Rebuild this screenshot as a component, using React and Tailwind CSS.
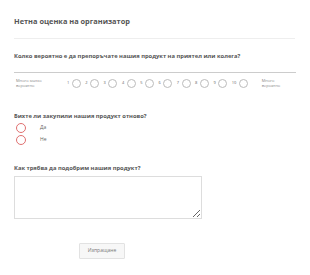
export default function App() {
  const nums = [1, 2, 3, 4, 5, 6, 7, 8, 9, 10]
  return (
    <div className="w-[310px] h-[275px] bg-white text-[#555] px-[14px] pt-[15px]" style={{ fontFamily: '"Open Sans", sans-serif' }}>
      <h1 className="text-[7.4px] font-bold leading-[12px] text-[#555]">Нетна оценка на организатор</h1>
      <div className="mt-[11px] border-t border-[#eee] mr-[1px]" />

      <p className="mt-[13px] text-[5.8px] font-bold leading-[8px] text-[#555]">
        Колко вероятно е да препоръчате нашия продукт на приятел или колега?
      </p>
      <div className="mt-[12px] border-t border-[#ccc]" />

      <div className="mt-[5px] flex items-center">
        <div className="w-[53px] pl-[2px]">
          <div className="w-[30px] text-[4px] leading-[5px] text-[#888]">Много малко вероятно</div>
        </div>
        <div className="flex items-center gap-[4.5px]">
          {nums.map(n => (
            <label key={n} className="flex items-center gap-[2.5px] text-[4px] text-[#666]">
              <span>{n}</span>
              <span className="w-[9px] h-[9px] rounded-full border border-[#bbb] bg-white" />
            </label>
          ))}
        </div>
        <div className="ml-[14px] text-[4px] leading-[5px] text-[#888]">Много<br />вероятно</div>
      </div>

      <p className="mt-[24px] text-[5.8px] font-bold leading-[8px] text-[#555]">
        Бихте ли закупили нашия продукт отново?
      </p>
      <div className="mt-[3px] flex flex-col gap-[2px] pl-[2px]">
        {['Да', 'Не'].map(t => (
          <label key={t} className="flex items-center h-[10px]">
            <span className="w-[10px] h-[10px] rounded-full border border-[#e07070] bg-white" />
            <span className="ml-[14px] text-[5px] text-[#666]">{t}</span>
          </label>
        ))}
      </div>

      <p className="mt-[19px] text-[5.8px] font-bold leading-[8px] text-[#555]">
        Как трябва да подобрим нашия продукт?
      </p>
      <textarea className="mt-[4px] block w-[188px] h-[43px] border border-[#ddd] bg-white outline-none" />

      <div className="mt-[24px] pl-[65px] flex">
        <button className="w-[46px] h-[16px] border border-[#e2e2e2] bg-[#f7f7f7] text-[5px] text-[#777] rounded-[1px]">Изпращане</button>
      </div>
    </div>
  )
}
